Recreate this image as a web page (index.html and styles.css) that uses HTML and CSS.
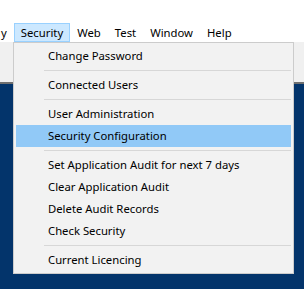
FILE: index.html
```html
<html>
<head>
    <title>Security Menu</title>
    <meta name="viewport" content="width=device-width, initial-scale=1.0">
    <link rel="stylesheet" href="styles.css">
</head>
<body>
    <div class="menubar">
        <span class="menu-item">y</span>
        <span class="menu-item open">Security</span>
        <span class="menu-item">Web</span>
        <span class="menu-item">Test</span>
        <span class="menu-item">Window</span>
        <span class="menu-item">Help</span>
    </div>
    <div class="toolbar"></div>
    <div class="workspace"></div>

    <!-- Security dropdown -->
    <div class="dropdown">
        <div class="entry">Change Password</div>
        <div class="separator"></div>
        <div class="entry">Connected Users</div>
        <div class="separator"></div>
        <div class="entry">User Administration</div>
        <div class="entry active">Security Configuration</div>
        <div class="separator"></div>
        <div class="entry">Set Application Audit for next 7 days</div>
        <div class="entry">Clear Application Audit</div>
        <div class="entry">Delete Audit Records</div>
        <div class="entry">Check Security</div>
        <div class="separator"></div>
        <div class="entry">Current Licencing</div>
    </div>
</body>
</html>
```

FILE: styles.css
```css
body {
    margin: 0;
    padding: 0;
    font-family: "Noto Sans", "Open Sans", sans-serif;
    font-size: 11.3px;
    color: #000;
    background-color: #03346b;
    height: 289px;
    overflow: hidden;
}
.menubar {
    background: white;
    height: 42px;
    padding-top: 23px;
    box-sizing: border-box;
    display: flex;
}
.menu-item {
    height: 19px;
    line-height: 17px;
    padding: 0 6px;
    border: 1px solid transparent;
    box-sizing: border-box;
    white-space: nowrap;
}
.menu-item:first-child {
    padding: 0 6px 0 0;
}
.menu-item.open {
    background: #cce8ff;
    border-color: #99d1ff;
}
.toolbar {
    height: 40px;
    background: #f0f0f0;
    border-bottom: 2px solid #6f6f6f;
}
.dropdown {
    position: absolute;
    left: 13px;
    top: 42px;
    width: 281px;
    box-sizing: border-box;
    background: #f2f2f2;
    border: 1px solid #cccccc;
    padding: 2px;
}
.entry {
    height: 22px;
    line-height: 22px;
    padding-left: 32px;
    white-space: nowrap;
}
.entry.active {
    background: #91c9f7;
}
.separator {
    height: 7px;
    margin-left: 28px;
}
.separator::after {
    content: "";
    display: block;
    height: 1px;
    background: #d7d7d7;
    transform: translateY(3px);
}
```
